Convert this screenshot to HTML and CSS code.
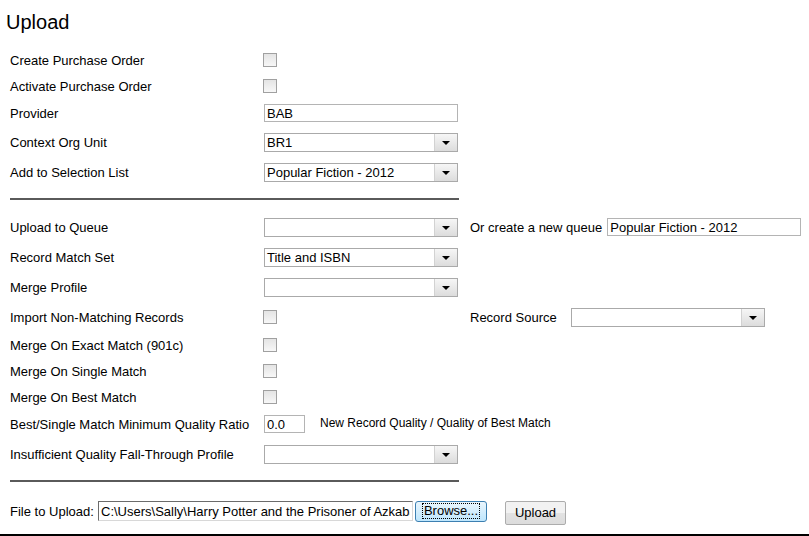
FILE: index.html
```html
<!DOCTYPE html>
<html>
<head>
<meta charset="utf-8">
<title>Upload</title>
<link rel="stylesheet" href="styles.css">
</head>
<body>
<h1 class="title">Upload</h1>
<div class="form">
  <div class="row h26"><span class="label">Create Purchase Order</span><input type="checkbox" class="cb"></div>
  <div class="row h26"><span class="label">Activate Purchase Order</span><input type="checkbox" class="cb"></div>
  <div class="row h28"><span class="label">Provider</span><input type="text" class="text wide" value="BAB"></div>
  <div class="row h30"><span class="label">Context Org Unit</span><div class="select"><span class="sel-val">BR1</span><span class="sel-btn"><i class="tri"></i></span></div></div>
  <div class="row h30"><span class="label">Add to Selection List</span><div class="select"><span class="sel-val">Popular Fiction - 2012</span><span class="sel-btn"><i class="tri"></i></span></div></div>
  <div class="rule rule-a"></div>
  <div class="row h30"><span class="label">Upload to Queue</span><div class="select"><span class="sel-val"></span><span class="sel-btn"><i class="tri"></i></span></div><span class="extra">Or create a new queue</span><input type="text" class="text queue" value="Popular Fiction - 2012"></div>
  <div class="row h30"><span class="label">Record Match Set</span><div class="select"><span class="sel-val">Title and ISBN</span><span class="sel-btn"><i class="tri"></i></span></div></div>
  <div class="row h30"><span class="label">Merge Profile</span><div class="select"><span class="sel-val"></span><span class="sel-btn"><i class="tri"></i></span></div></div>
  <div class="row h30"><span class="label">Import Non-Matching Records</span><input type="checkbox" class="cb"><span class="extra source-label">Record Source</span><div class="select"><span class="sel-val"></span><span class="sel-btn"><i class="tri"></i></span></div></div>
  <div class="row h26"><span class="label">Merge On Exact Match (901c)</span><input type="checkbox" class="cb"></div>
  <div class="row h26"><span class="label">Merge On Single Match</span><input type="checkbox" class="cb"></div>
  <div class="row h26"><span class="label">Merge On Best Match</span><input type="checkbox" class="cb"></div>
  <div class="row h28"><span class="label">Best/Single Match Minimum Quality Ratio</span><input type="text" class="text ratio" value="0.0"><span class="hint">New Record Quality / Quality of Best Match</span></div>
  <div class="row h32"><span class="label">Insufficient Quality Fall-Through Profile</span><div class="select"><span class="sel-val"></span><span class="sel-btn"><i class="tri"></i></span></div></div>
  <div class="rule rule-b"></div>
  <div class="row h30 file-row"><span class="file-label">File to Upload:</span><input type="text" class="text file" value="C:\Users\Sally\Harry Potter and the Prisoner of Azkaban.mrc"><button class="browse"><span class="focus">Browse...</span></button><button class="upload">Upload</button></div>
</div>
<div class="bottom-line"></div>
</body>
</html>
```

FILE: styles.css
```css
html, body {
  margin: 0;
  padding: 0;
  background: #fff;
}
body {
  font-family: "Liberation Sans", Arial, sans-serif;
  font-size: 13px;
  color: #000;
  width: 809px;
  height: 536px;
  overflow: hidden;
}
.title {
  margin: 0;
  padding: 10px 0 0 6px;
  height: 47px;
  box-sizing: border-box;
  font-size: 20px;
  font-weight: normal;
  line-height: 24px;
}
.form {
  padding-left: 10px;
}
.row {
  display: flex;
  align-items: center;
}
.h26 { height: 26px; }
.h28 { height: 28px; }
.h30 { height: 30px; }
.h32 { height: 32px; }
.label {
  width: 254px;
  flex: none;
  white-space: nowrap;
}
.cb {
  -webkit-appearance: none;
  appearance: none;
  margin: 0 0 0 -1px;
  width: 14px;
  height: 14px;
  box-sizing: border-box;
  border: 1px solid #a0a0a0;
  background: linear-gradient(#e4e4e4, #f7f7f7);
}
.text {
  margin: 0;
  box-sizing: border-box;
  height: 18px;
  border: 1px solid #b4b4b4;
  padding: 0 2px;
  font-family: "Liberation Sans", Arial, sans-serif;
  font-size: 13px;
  color: #000;
  background: #fff;
  outline: none;
}
.wide { width: 194px; }
.select {
  display: flex;
  width: 194px;
  height: 19px;
  box-sizing: border-box;
  border: 1px solid #aaa;
  background: #fff;
  flex: none;
}
.sel-val {
  flex: 1;
  padding-left: 2px;
  line-height: 17px;
  white-space: nowrap;
  overflow: hidden;
}
.sel-btn {
  width: 22px;
  border-left: 1px solid #d2d2d2;
  background: linear-gradient(#f6f6f6, #dcdcdc);
  display: flex;
  align-items: center;
  justify-content: center;
}
.tri {
  width: 0;
  height: 0;
  border-left: 4px solid transparent;
  border-right: 4px solid transparent;
  border-top: 4px solid #000;
  margin-top: 1px;
}
.extra {
  margin-left: 12px;
  white-space: nowrap;
}
.queue {
  margin-left: 5px;
  width: 194px;
  height: 18px;
}
.source-label {
  margin-left: 193px;
  width: 101px;
}
.ratio {
  width: 41px;
  height: 18px;
}
.hint {
  margin-left: 15px;
  font-size: 12px;
  margin-top: -2px;
}
.rule {
  width: 449px;
  height: 0;
  border-top: 2px solid #5a5a5a;
}
.rule-a { margin: 11px 0 12px; }
.rule-b { margin: 10px 0 14px; }
.file-label {
  white-space: nowrap;
  width: 88px;
}
.file {
  width: 315px;
  height: 20px;
  border-top: 1px solid #6b6b6b;
  border-left: 1px solid #6b6b6b;
  border-right: 1px solid #d8d8d8;
  border-bottom: 1px solid #d8d8d8;
  padding: 0 2px;
}
.browse {
  margin: 0 0 0 2px;
  width: 72px;
  height: 21px;
  box-sizing: border-box;
  border: 1px solid #3c7fb1;
  border-radius: 3px;
  background: linear-gradient(#eaf6fd, #bee6fd);
  padding: 1px;
  font-family: "Liberation Sans", Arial, sans-serif;
  font-size: 13px;
  color: #000;
  display: flex;
  align-items: center;
  justify-content: center;
}
.focus {
  border: 1px dotted #000;
  padding: 0 1px;
  line-height: 14px;
}
.upload {
  margin: 3px 0 0 18px;
  width: 61px;
  height: 24px;
  box-sizing: border-box;
  border: 1px solid #acacac;
  border-radius: 2px;
  background: linear-gradient(#f2f2f2 50%, #e2e2e2 50%, #dcdcdc);
  font-family: "Liberation Sans", Arial, sans-serif;
  font-size: 13px;
  color: #000;
  padding: 0;
}
.bottom-line {
  margin-top: 8px;
  height: 2px;
  background: #000;
  width: 809px;
}
```
